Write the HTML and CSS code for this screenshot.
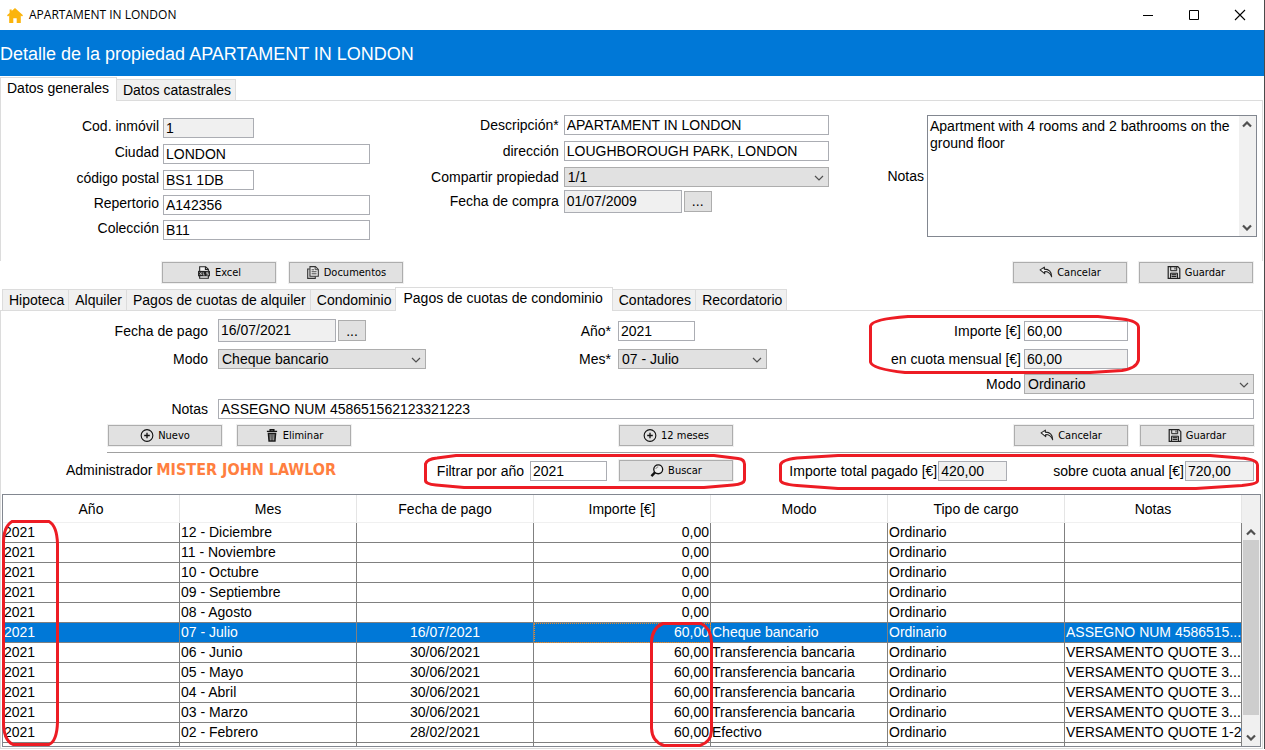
FILE: index.html
```html
<!DOCTYPE html>
<html lang="es">
<head>
<meta charset="utf-8">
<title>APARTAMENT IN LONDON</title>
<link rel="stylesheet" href="styles.css">
</head>
<body>
<svg class="defs" aria-hidden="true">
  <symbol id="chev" viewBox="0 0 10 6"><path d="M1 1l4 4 4-4" fill="none" stroke="#505050" stroke-width="1.2"/></symbol>
  <symbol id="down" viewBox="0 0 10 7"><path d="M1 1.5l4 4 4-4" fill="none" stroke="#505050" stroke-width="2.2"/></symbol>
  <symbol id="up" viewBox="0 0 10 7"><path d="M1 5.5l4-4 4 4" fill="none" stroke="#505050" stroke-width="2.2"/></symbol>
  <symbol id="undo" viewBox="0 0 13 12"><path d="M5 1L1 3.6 5.3 7V5.1c3.500 0 5.200 1.500 6.500 4.900C11.700 5.600 9.500 3 5 2.900z" fill="#f4f4f4" stroke="#222" stroke-width="1" stroke-linejoin="round"/></symbol>
  <symbol id="save" viewBox="0 0 13 13"><path d="M.7.7h9.600l2 2v9.600H.7z" fill="#ddd" stroke="#222" stroke-width="1.200"/><path d="M3.200.7v4h6v-4M7.500 1.500v2" fill="none" stroke="#222"/><path d="M3 12V7.200h7V12" fill="#aaa" stroke="#222"/><path d="M4.200 8.700h4.600M4.200 10.500h4.600" stroke="#222"/></symbol>
  <symbol id="plus" viewBox="0 0 14 14"><circle cx="7" cy="7" r="6.300" fill="none" stroke="#111" stroke-width="1.200"/><path d="M7 4v6M4 7h6" stroke="#111" stroke-width="1.400"/></symbol>
  <symbol id="trash" viewBox="0 0 12 14"><path d="M.5 2.500h11M4 2.200V.8h4v1.400" fill="none" stroke="#111" stroke-width="1.500"/><path d="M1.300 4h9.400l-.8 9.700H2.100z" fill="#1a1a1a"/><path d="M3.900 5.500l.3 6.700M6 5.500v6.700M8.100 5.500l-.3 6.700" stroke="#ccc" stroke-width=".9"/></symbol>
  <symbol id="find" viewBox="0 0 14 14"><circle cx="8.300" cy="5.700" r="4.800" fill="#eee" stroke="#111" stroke-width="1.400"/><path d="M5.800 5.300c.3-1.300 1.200-2 2.500-2.100" fill="none" stroke="#555" stroke-width=".9"/><path d="M4.900 9.100L1 13" stroke="#111" stroke-width="2.600"/></symbol>
  <symbol id="xls" viewBox="0 0 12 12"><path d="M2 5V.7h5.500L10 3v2M2 9v2.300h8V9" fill="#f4f4f4" stroke="#222"/><path d="M7.300.7V3.300H10" fill="none" stroke="#222"/><path d="M.5 4.500h11v5H.5z" fill="#222"/><path d="M2 5.800l2 2.500m0-2.500L2 8.300m3.300-2.500v2.500h1.300m3.400-2.500H8.500v1.200H10v1.300H8.300" fill="none" stroke="#ddd" stroke-width=".7"/></symbol>
  <symbol id="docs" viewBox="0 0 11 12"><path d="M2.500 2.700H.6v8.700h7V9.500" fill="#ddd" stroke="#333"/><path d="M2.700.6h5l2.700 2.600v6.300H2.700z" fill="#eee" stroke="#333"/><path d="M7.500.6v2.800h2.800M4.200 3.500h2.300M4.200 5.300h4.600M4.200 7.200h4.600" fill="none" stroke="#444" stroke-width=".9"/></symbol>
</svg>

<div class="window">
  <header class="titlebar">
    <svg class="home" viewBox="0 0 16 15"><path d="M8 0l8 7.300-1 1.100-1.200-1V15H9.700v-4.800H6.300V15H2.200V7.400L1 8.400 0 7.300 2.600 5V1.500h2.100v1.600z" fill="#fbb40c"/></svg>
    <span class="caption">APARTAMENT IN LONDON</span>
    <button class="win" aria-label="Minimizar"><svg viewBox="0 0 12 12"><path d="M1 6.500h10" stroke="#000"/></svg></button>
    <button class="win" aria-label="Maximizar"><svg viewBox="0 0 12 12"><path d="M1.500 1.500h9v9h-9z" fill="none" stroke="#000"/></svg></button>
    <button class="win" aria-label="Cerrar"><svg viewBox="0 0 12 12"><path d="M1 1l10 10M11 1L1 11" stroke="#000" stroke-width="1.100"/></svg></button>
  </header>
  <h1 class="heading">Detalle de la propiedad APARTAMENT IN LONDON</h1>

  <nav class="tabs">
    <button class="tab active">Datos generales</button>
    <button class="tab">Datos catastrales</button>
  </nav>
  <section class="panel general">
    <div class="fields ids">
      <label for="cod">Cod. inmóvil</label><input id="cod" class="short" value="1" readonly>
      <label for="ciu">Ciudad</label><input id="ciu" value="LONDON">
      <label for="cp">código postal</label><input id="cp" class="short" value="BS1 1DB">
      <label for="rep">Repertorio</label><input id="rep" value="A142356">
      <label for="col">Colección</label><input id="col" value="B11">
    </div>
    <div class="fields desc">
      <label for="des">Descripción*</label><input id="des" value="APARTAMENT IN LONDON">
      <label for="dir">dirección</label><input id="dir" value="LOUGHBOROUGH PARK, LONDON">
      <label for="com">Compartir propiedad</label>
      <span class="pick"><select id="com"><option>1/1</option></select><svg><use href="#chev"/></svg></span>
      <label for="fec">Fecha de compra</label>
      <span class="date"><input id="fec" value="01/07/2009" readonly><button class="dots">...</button></span>
    </div>
    <div class="notes">
      <label for="not">Notas</label>
      <div class="memo">
        <textarea id="not">Apartment with 4 rooms and 2 bathrooms on the ground floor</textarea>
        <div class="bar"><svg><use href="#up"/></svg><svg><use href="#down"/></svg></div>
      </div>
    </div>
  </section>
  <div class="actions">
    <div class="group">
      <button class="btn"><svg><use href="#xls"/></svg>Excel</button>
      <button class="btn"><svg><use href="#docs"/></svg>Documentos</button>
    </div>
    <div class="right">
      <button class="btn"><svg><use href="#undo"/></svg>Cancelar</button>
      <button class="btn"><svg><use href="#save"/></svg>Guardar</button>
    </div>
  </div>

  <nav class="tabs lower">
    <button class="tab">Hipoteca</button>
    <button class="tab">Alquiler</button>
    <button class="tab">Pagos de cuotas de alquiler</button>
    <button class="tab">Condominio</button>
    <button class="tab active">Pagos de cuotas de condominio</button>
    <button class="tab">Contadores</button>
    <button class="tab">Recordatorio</button>
  </nav>
  <section class="panel payments">
    <div class="thirds">
      <div class="fields pay">
        <label for="fp">Fecha de pago</label>
        <span class="date"><input id="fp" value="16/07/2021" readonly><button class="dots">...</button></span>
        <label for="mo">Modo</label>
        <span class="pick"><select id="mo"><option>Cheque bancario</option></select><svg><use href="#chev"/></svg></span>
      </div>
      <div class="fields period">
        <label for="an">Año*</label><input id="an" class="year" value="2021">
        <label for="me">Mes*</label>
        <span class="pick"><select id="me"><option>07 - Julio</option></select><svg><use href="#chev"/></svg></span>
      </div>
      <div class="fields amount">
        <label for="im">Importe [€]</label><input id="im" class="money" value="60,00">
        <label for="cm">en cuota mensual [€]</label><input id="cm" class="money" value="60,00" readonly>
        <label for="tc">Modo</label>
        <span class="pick"><select id="tc"><option>Ordinario</option></select><svg><use href="#chev"/></svg></span>
      </div>
    </div>
    <div class="noterow"><label for="n2">Notas</label><input id="n2" value="ASSEGNO NUM 458651562123321223"></div>
    <div class="thirds commands">
      <div class="left">
        <button class="btn"><svg><use href="#plus"/></svg>Nuevo</button>
        <button class="btn"><svg><use href="#trash"/></svg>Eliminar</button>
      </div>
      <div class="mid"><button class="btn"><svg><use href="#plus"/></svg>12 meses</button></div>
      <div class="right">
        <button class="btn"><svg><use href="#undo"/></svg>Cancelar</button>
        <button class="btn"><svg><use href="#save"/></svg>Guardar</button>
      </div>
    </div>
    <hr>
    <div class="thirds summary">
      <div class="admin">Administrador <strong>MISTER JOHN LAWLOR</strong></div>
      <div class="mid">
        <label for="fi">Filtrar por año</label><input id="fi" class="year" value="2021">
        <button class="btn"><svg><use href="#find"/></svg>Buscar</button>
      </div>
      <div class="right totals">
        <span><label for="tp">Importe total pagado [€]</label><input id="tp" value="420,00" readonly></span>
        <span><label for="ca">sobre cuota anual [€]</label><input id="ca" value="720,00" readonly></span>
      </div>
    </div>
    <div class="grid">
      <table>
        <thead><tr><th>Año</th><th>Mes</th><th>Fecha de pago</th><th>Importe [€]</th><th>Modo</th><th>Tipo de cargo</th><th>Notas</th></tr></thead>
        <tbody>
          <tr><td>2021</td><td>12 - Diciembre</td><td></td><td>0,00</td><td></td><td>Ordinario</td><td></td></tr>
          <tr><td>2021</td><td>11 - Noviembre</td><td></td><td>0,00</td><td></td><td>Ordinario</td><td></td></tr>
          <tr><td>2021</td><td>10 - Octubre</td><td></td><td>0,00</td><td></td><td>Ordinario</td><td></td></tr>
          <tr><td>2021</td><td>09 - Septiembre</td><td></td><td>0,00</td><td></td><td>Ordinario</td><td></td></tr>
          <tr><td>2021</td><td>08 - Agosto</td><td></td><td>0,00</td><td></td><td>Ordinario</td><td></td></tr>
          <tr class="selected"><td>2021</td><td>07 - Julio</td><td>16/07/2021</td><td class="focus">60,00</td><td>Cheque bancario</td><td>Ordinario</td><td>ASSEGNO NUM 4586515...</td></tr>
          <tr><td>2021</td><td>06 - Junio</td><td>30/06/2021</td><td>60,00</td><td>Transferencia bancaria</td><td>Ordinario</td><td>VERSAMENTO QUOTE 3...</td></tr>
          <tr><td>2021</td><td>05 - Mayo</td><td>30/06/2021</td><td>60,00</td><td>Transferencia bancaria</td><td>Ordinario</td><td>VERSAMENTO QUOTE 3...</td></tr>
          <tr><td>2021</td><td>04 - Abril</td><td>30/06/2021</td><td>60,00</td><td>Transferencia bancaria</td><td>Ordinario</td><td>VERSAMENTO QUOTE 3...</td></tr>
          <tr><td>2021</td><td>03 - Marzo</td><td>30/06/2021</td><td>60,00</td><td>Transferencia bancaria</td><td>Ordinario</td><td>VERSAMENTO QUOTE 3...</td></tr>
          <tr><td>2021</td><td>02 - Febrero</td><td>28/02/2021</td><td>60,00</td><td>Efectivo</td><td>Ordinario</td><td>VERSAMENTO QUOTE 1-2</td></tr>
          <tr class="partial"><td></td><td></td><td></td><td></td><td></td><td></td><td></td></tr>
        </tbody>
      </table>
      <div class="scroll"><svg><use href="#up"/></svg><div class="thumb"></div><svg><use href="#down"/></svg></div>
    </div>
  </section>
  <svg class="marks" viewBox="0 0 1265 750" aria-hidden="true">
    <path d="M908 316.500H1098L1122 319Q1138 321 1138.500 327V360Q1137 368 1122 370.500L1090 372.500H905Q872 369 870.500 362V326Q872 319 908 316.500z"/>
    <path d="M456 455.500H714L738 458.500Q745 459.500 744.500 465V480Q744 484 733 485L704 487.500H464L436 485Q425 484 425.500 480V464Q427 459 437 458z"/>
    <path d="M838 455.500H1210L1240 458Q1257 459 1257.500 465V481Q1257 484 1242 485.500L1196 488.500H838L797 485.500Q780 484 780.500 480V465Q781 460 797 458z"/>
    <path d="M12 521.500H49Q57 526 57.500 544V722Q57 741 49 744.500H13Q3 740 3.500 720V545Q3 527 12 521.500z"/>
    <path d="M663 623.500H701Q711 628 711.500 642V731Q711 742 700 745.500H664Q652 742 651.500 728V642Q652 628 663 623.500z"/>
  </svg>
</div>
</body>
</html>
```
FILE: styles.css
```css
* { box-sizing: border-box; }
body {
  margin: 0;
  background: #fff;
  color: #000;
  font: 14px/20px "Liberation Sans", Arial, sans-serif;
}
button, input, select, textarea { font: inherit; color: inherit; margin: 0; border-radius: 0; }
.defs { position: absolute; width: 0; height: 0; }
.window { position: relative; border-right: 1px solid #4a4a4a; padding-right: 1px; }

.titlebar { display: flex; align-items: center; height: 30px; padding-left: 7px; }
.home { width: 16px; height: 15px; margin-right: 6px; }
.caption { flex: 1; font: 12px/18px "Open Sans", sans-serif; }
.win { display: flex; align-items: center; justify-content: center; width: 46px; height: 28px; padding: 0; border: 0; background: none; }
.win svg { width: 12px; height: 12px; }
.heading {
  margin: 0 -1px 0 0;
  background: #0078d7;
  color: #fff;
  font-size: 18px;
  font-weight: 400;
  line-height: 48px;
  height: 46px;
}

.tabs { display: flex; align-items: flex-end; height: 24px; }
.tab {
  height: 21px;
  padding: 0 4px 0 6px;
  border: 1px solid #dcdcdc;
  border-bottom: 0;
  margin-left: -1px;
  background: #f0f0f0;
  white-space: nowrap;
}
.tab.active { position: relative; height: 24px; padding: 0 7px 4px; margin-bottom: -1px; background: #fff; }
.tabs .active:first-child { margin-left: 0; padding-left: 6px; }
.lower { margin-top: 2px; padding-left: 3px; }
.lower .active { padding-right: 9px; }
.panel { border: 1px solid #dcdcdc; }

input, select {
  height: 20px;
  width: 100%;
  min-width: 0;
  padding: 0 2px;
  border: 1px solid #abadb3;
  background: #fff;
}
input[readonly] { background: #f0f0f0; }
select { appearance: none; background: #e1e1e1; border-color: #adadad; padding: 0 3px; display: block; line-height: 17px; }
.pick { position: relative; width: 100%; }
.pick svg { position: absolute; right: 5px; top: 8px; width: 10px; height: 6px; }
.fields { display: grid; align-items: center; }
label { white-space: nowrap; }
.fields label { text-align: right; }
.date { display: flex; align-items: center; gap: 2px; }
.date input { width: 118px; height: 23px; padding-bottom: 1px; }
.dots { width: 28px; height: 21px; padding: 0; border: 1px solid #adadad; background: #e1e1e1; line-height: 16px; }

.general {
  display: flex;
  justify-content: space-between;
  align-items: flex-start;
  border-bottom: 0;
  height: 161px;
  padding: 14px 5px 0 0;
}
.ids { grid-template-columns: 158px 207px; grid-template-rows: 26px 26px 25px 25px 20px; align-items: start; column-gap: 4px; padding-top: 3px; }
.ids label { line-height: 16px; }
.short { width: 91px; }
.desc { grid-template-columns: 130px 265px; grid-template-rows: 26px 26px 24px 20px; align-items: start; column-gap: 5px; }
.desc .date { height: 20px; }
.notes { display: flex; align-items: center; gap: 3px; }
.memo { display: flex; width: 330px; height: 122px; border: 1px solid #828790; }
.memo textarea { flex: 1; min-width: 0; padding: 2px; border: 0; resize: none; overflow: hidden; line-height: 17px; background: #fff; outline: 0; }
.bar { display: flex; flex-direction: column; justify-content: space-between; align-items: center; width: 17px; padding: 5px 0; background: #f0f0f0; }
.bar svg, .scroll svg { width: 10px; height: 7px; }

.actions { display: flex; justify-content: space-between; height: 23px; align-items: center; padding: 0 10px 0 162px; }
.group { display: flex; gap: 13px; }
.btn {
  display: flex;
  align-items: center;
  justify-content: center;
  gap: 4px;
  width: 114px;
  height: 21px;
  padding: 0;
  border: 1px solid #adadad;
  background: #e1e1e1;
  box-shadow: 0 0 0 1px #f0f0f0;
  font: 11px/16px Tahoma, "DejaVu Sans Condensed", "DejaVu Sans", sans-serif;
}
.btn svg { width: 14px; height: 13px; }

.payments { padding-top: 8px; }
.thirds { display: grid; grid-template-columns: 425fr 341fr 487fr; padding-right: 8px; }
.thirds > div { align-content: start; }
.pay { grid-template-columns: 207px 208px; column-gap: 10px; row-gap: 7px; }
.period { grid-template-columns: auto 149px; column-gap: 7px; row-gap: 8px; justify-content: end; padding-top: 2px; }
.year { width: 77px; }
.amount { grid-template-columns: auto 230px; grid-template-rows: 28px 25px 20px; align-items: start; column-gap: 3px; justify-content: end; padding-top: 2px; }
.money { width: 104px; }
.noterow { display: flex; gap: 10px; padding: 5px 8px 0 0; }
.noterow label { width: 207px; flex: none; text-align: right; }
.commands { padding-top: 6px; }
.left, .mid, .right { display: flex; align-items: center; }
.left { gap: 15px; padding-left: 107px; }
.mid { gap: 12px; justify-content: flex-end; padding-right: 34px; }
.mid label { margin-right: -6px; }
.right { gap: 12px; justify-content: flex-end; }
hr { margin: 6px 8px 0 106px; border: 0; border-top: 1px solid #a0a0a0; }
.summary { padding-top: 7px; }
.admin { padding-left: 65px; white-space: nowrap; line-height: 20px; }
.admin strong { color: #ff7f40; font: bold 16px/20px Tahoma, "DejaVu Sans Condensed", "DejaVu Sans", sans-serif; }
.totals { gap: 46px; }
.totals span { display: flex; gap: 1px; }
.totals input { width: 69px; }

.grid { display: flex; margin: 13px 1px 1px; border: 1px solid #828790; }
table { flex: 1; width: 100%; min-width: 0; table-layout: fixed; border-collapse: separate; border-spacing: 0; }
th { height: 28px; padding: 0; font-weight: 400; border-right: 1px solid #e5e5e5; border-bottom: 1px solid #f0f0f0; }
td {
  height: 20px;
  padding: 0 1px;
  line-height: 19px;
  border-right: 1px solid #808080;
  border-bottom: 1px solid #808080;
  white-space: nowrap;
  overflow: hidden;
}
td:nth-child(3) { text-align: center; }
td:nth-child(4) { text-align: right; }
.selected td { background: #0078d7; color: #fff; }
.selected .focus { outline: 1px dotted #e88b28; outline-offset: -1px; }
.partial td { height: 3px; border-bottom: 0; }
.scroll { display: flex; flex-direction: column; align-items: center; flex: none; width: 18px; padding: 34px 1px 5px; background: #f0f0f0; }
.thumb { width: 100%; flex: 1; margin: 4px 0 19px; background: #cdcdcd; }
.marks { position: absolute; left: 0; top: 0; width: 1265px; height: 750px; pointer-events: none; fill: none; stroke: #ed1c24; stroke-width: 3; }
```
